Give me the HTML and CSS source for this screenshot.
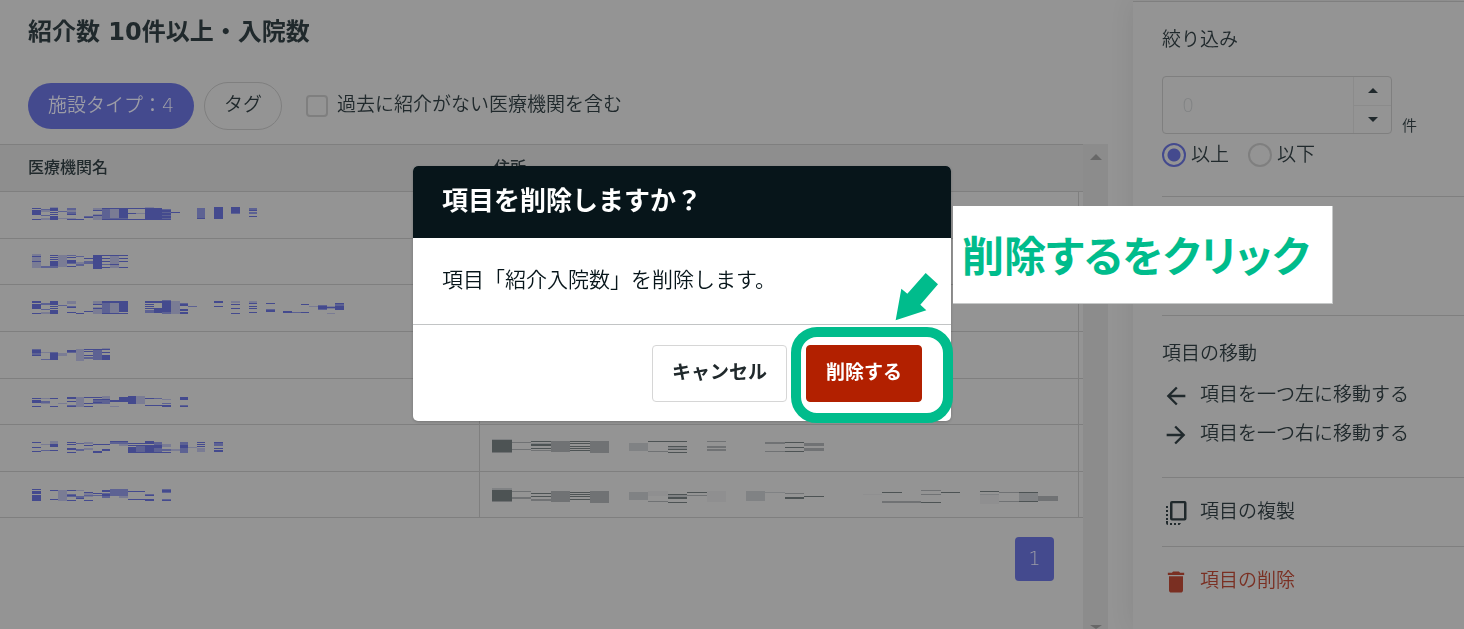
FILE: index.html
```html
<!DOCTYPE html>
<html lang="ja">
<head>
<meta charset="utf-8">
<meta name="viewport" content="width=device-width, initial-scale=1">
<title>紹介数 10件以上・入院数</title>
<link rel="stylesheet" href="styles.css">
</head>
<body>
<div class="app">
  <main class="main">
    <header class="toolbar">
      <h1 class="title">紹介数 10件以上・入院数</h1>
      <div class="filters">
        <button class="chip chip-active" type="button">施設タイプ：4</button>
        <button class="chip" type="button">タグ</button>
        <label class="check"><input class="check-box" type="checkbox"><span>過去に紹介がない医療機関を含む</span></label>
      </div>
    </header>
    <div class="scroller">
      <div class="scroll-content">
        <table class="grid">
          <thead><tr><th class="col-name">医療機関名</th><th class="col-address">住所</th><th class="col-end"></th></tr></thead>
          <tbody>
            <tr><td><svg class="mosaic" width="230" height="20" viewBox="96 42 690 60" shape-rendering="crispEdges">
              <path class="m1" d="M96 54h27v3h-27zM96 60h27v15h-27zM96 87h27v3h-27zM150 54h24v9h-24zM150 66h24v3h-24zM150 72h24v3h-24zM150 78h24v12h-24zM201 72h27v3h-27zM201 87h27v3h-27zM228 87h24v3h-24zM252 81h27v3h-27zM279 60h27v3h-27zM279 75h27v3h-27zM306 54h129v3h-129zM357 57h27v27h-27zM306 87h207v3h-207zM384 69h24v3h-24zM435 54h51v36h-51zM486 60h27v6h-27zM486 69h27v6h-27zM486 78h27v6h-27zM513 66h27v3h-27zM591 84h24v3h-24zM642 51h27v36h-27zM693 51h27v18h-27zM747 60h24v3h-24zM747 78h24v3h-24z"/>
              <path class="m2" d="M123 57h27v3h-27zM123 75h27v3h-27zM174 63h27v3h-27zM201 54h27v6h-27zM201 66h27v6h-27zM252 78h27v3h-27zM306 57h24v30h-24zM330 84h54v3h-54zM486 57h27v33h-27zM591 54h24v30h-24zM693 69h27v3h-27zM747 54h24v6h-24zM747 66h24v6h-24z"/>
              <path class="m3" d="M123 60h27v6h-27zM123 84h27v6h-27zM150 51h24v3h-24zM174 84h27v3h-27zM201 60h27v6h-27zM201 84h27v3h-27zM279 54h27v6h-27zM279 72h27v18h-27zM330 57h27v27h-27zM408 69h27v3h-27zM435 51h27v3h-27z"/></svg></td><td></td><td></td></tr>
            <tr><td><svg class="mosaic" width="100" height="20" viewBox="96 183 300 60" shape-rendering="crispEdges">
              <path class="m1" d="M96 198h27v3h-27zM96 213h27v3h-27zM150 195h24v3h-24zM150 201h24v3h-24zM150 207h24v3h-24zM150 213h24v14h-24zM201 201h27v3h-27zM201 210h27v9h-27zM201 228h27v3h-27zM252 204h27v3h-27zM279 195h27v42h-27zM306 195h78v3h-78zM306 204h24v3h-24zM306 213h24v3h-24zM306 231h24v3h-24zM357 204h27v3h-27zM357 213h27v3h-27zM330 222h27v3h-27zM357 231h27v3h-27z"/>
              <path class="m2" d="M123 228h51v6h-51zM201 195h27v3h-27zM201 219h27v3h-27zM228 198h24v3h-24zM228 222h24v5h-24zM252 213h27v9h-27zM306 222h24v3h-24z"/>
              <path class="m3" d="M96 192h27v42h-27zM174 195h27v36h-27zM228 216h24v6h-24zM330 198h27v36h-27z"/></svg></td><td></td><td></td></tr>
            <tr><td><svg class="mosaic" width="320" height="20" viewBox="96 321 960 60" shape-rendering="crispEdges">
              <path class="m1" d="M96 333h27v6h-27zM96 342h27v15h-27zM96 369h27v3h-27zM150 333h24v12h-24zM150 348h24v3h-24zM150 354h24v3h-24zM150 360h24v12h-24zM201 351h27v3h-27zM201 366h27v3h-27zM228 369h24v3h-24zM252 363h27v3h-27zM279 342h27v3h-27zM279 354h27v3h-27zM306 333h78v6h-78zM357 339h27v27h-27zM306 369h78v3h-78zM435 333h51v6h-51zM435 342h27v3h-27zM435 348h27v3h-27zM435 354h51v3h-51zM462 354h24v15h-24zM486 333h27v33h-27zM540 342h24v6h-24zM540 357h24v6h-24zM540 366h24v6h-24zM642 333h27v6h-27zM642 348h27v3h-27zM693 342h27v3h-27zM693 354h27v3h-27zM693 369h27v3h-27zM747 339h24v3h-24zM747 348h24v3h-24zM747 354h24v3h-24zM747 366h24v3h-24zM798 339h27v3h-27zM798 360h27v5h-27zM849 363h27v6h-27zM903 342h24v3h-24zM903 366h24v3h-24zM954 348h27v9h-27zM981 351h24v3h-24zM1005 339h27v3h-27zM1005 348h27v12h-27z"/>
              <path class="m2" d="M123 339h27v6h-27zM123 357h27v3h-27zM174 345h27v3h-27zM201 348h27v3h-27zM306 339h24v30h-24zM435 360h27v9h-27zM486 330h27v42h-27zM540 339h24v3h-24zM564 348h27v3h-27zM798 357h27v3h-27zM876 366h27v3h-27zM954 345h27v15h-27zM1005 342h27v6h-27z"/>
              <path class="m3" d="M123 366h27v6h-27zM201 333h27v9h-27zM279 333h27v9h-27zM279 351h27v21h-27zM330 339h27v30h-27zM513 333h27v39h-27zM693 333h27v5h-27zM747 333h24v6h-24zM927 348h27v3h-27zM981 348h24v9h-24zM981 369h24v3h-24z"/></svg></td><td></td><td></td></tr>
            <tr><td><svg class="mosaic" width="90" height="20" viewBox="96 12 270 60" shape-rendering="crispEdges">
              <path class="m1" d="M96 30h27v9h-27zM96 45h27v3h-27zM150 39h24v21h-24zM201 30h27v6h-27zM252 27h78v3h-78zM252 33h27v3h-27zM252 45h27v3h-27zM306 36h24v3h-24zM306 45h24v15h-24z"/>
              <path class="m2" d="M96 27h27v18h-27zM123 57h27v3h-27zM150 36h24v3h-24zM201 36h27v3h-27zM252 51h27v6h-27zM279 30h27v30h-27z"/>
              <path class="m3" d="M123 36h27v3h-27zM174 39h27v9h-27zM228 27h24v36h-24zM306 24h24v3h-24z"/></svg></td><td></td><td></td></tr>
            <tr><td><svg class="mosaic" width="170" height="20" viewBox="96 153 510 60" shape-rendering="crispEdges">
              <path class="m1" d="M96 174h27v3h-27zM96 180h27v9h-27zM96 198h27v3h-27zM150 174h24v3h-24zM150 198h24v3h-24zM201 171h27v6h-27zM201 183h27v3h-27zM201 198h27v3h-27zM252 171h54v3h-54zM252 189h27v3h-27zM252 198h27v3h-27zM279 177h51v3h-51zM279 186h27v3h-27zM330 180h27v6h-27zM357 171h27v15h-27zM384 168h24v24h-24zM435 174h27v3h-27zM435 195h78v3h-78zM486 198h27v3h-27zM540 171h24v9h-24zM540 198h24v3h-24z"/>
              <path class="m2" d="M123 183h27v6h-27zM201 195h27v3h-27zM279 180h51v12h-51zM462 174h24v3h-24zM486 189h27v3h-27zM540 195h24v3h-24z"/>
              <path class="m3" d="M123 174h27v3h-27zM123 189h27v3h-27zM174 189h27v3h-27zM228 171h24v30h-24zM306 168h24v9h-24zM330 198h27v3h-27zM408 168h27v24h-27zM486 177h27v3h-27z"/></svg></td><td></td><td></td></tr>
            <tr><td><svg class="mosaic" width="200" height="20" viewBox="96 291 600 60" shape-rendering="crispEdges">
              <path class="m1" d="M96 306h27v3h-27zM96 321h27v3h-27zM96 333h27v3h-27zM150 312h24v9h-24zM150 330h24v3h-24zM201 306h27v3h-27zM201 312h27v3h-27zM201 324h27v6h-27zM201 336h27v3h-27zM252 315h27v3h-27zM279 312h51v3h-51zM279 333h27v6h-27zM306 327h24v6h-24zM330 303h54v3h-54zM384 309h51v3h-51zM384 315h102v3h-102zM384 321h24v18h-24zM408 336h105v3h-105zM435 303h27v9h-27zM435 318h27v18h-27zM462 318h24v6h-24zM540 315h24v9h-24zM591 306h24v3h-24zM591 312h24v3h-24zM591 318h24v3h-24zM642 306h27v3h-27zM642 324h27v3h-27zM642 330h27v6h-27z"/>
              <path class="m2" d="M123 330h27v3h-27zM228 309h24v3h-24zM228 327h24v5h-24zM330 306h54v6h-54zM408 318h27v18h-27zM462 306h24v9h-24zM462 324h24v12h-24zM486 327h27v6h-27zM540 306h24v33h-24zM642 309h27v9h-27z"/>
              <path class="m3" d="M123 312h27v3h-27zM150 303h24v9h-24zM252 306h27v6h-27zM252 324h27v6h-27zM357 312h27v6h-27zM486 312h27v9h-27zM513 327h27v6h-27zM564 321h27v3h-27zM591 324h24v12h-24z"/></svg></td>
              <td><svg class="mosaic" width="340" height="20" viewBox="66 81 1020 60" shape-rendering="crispEdges">
              <path class="g1" d="M66 90h60v36h-60zM183 93h60v3h-60zM183 102h60v6h-60zM183 114h60v3h-60zM300 93h60v3h-60zM300 99h60v3h-60zM300 108h60v3h-60zM300 114h60v3h-60zM300 120h60v3h-60zM534 93h117v3h-117zM594 108h57v3h-57zM594 117h57v3h-57zM594 126h57v3h-57zM945 96h57v3h-57zM945 111h57v3h-57zM945 123h57v3h-57z"/>
              <path class="g2" d="M66 126h60v3h-60zM126 96h57v3h-57zM126 117h57v3h-57zM183 120h60v3h-60zM243 93h57v33h-57zM360 93h57v36h-57zM534 123h60v3h-60zM711 93h57v3h-57zM711 108h57v6h-57zM711 117h57v6h-57zM885 96h60v5h-60zM885 123h60v3h-60zM1002 99h60v9h-60zM1002 114h60v9h-60z"/>
              <path class="g3" d="M66 87h60v3h-60zM183 99h60v3h-60zM477 99h57v24h-57zM594 111h57v6h-57z"/></svg></td><td></td></tr>
            <tr><td><svg class="mosaic" width="160" height="20" viewBox="96 432 480 60" shape-rendering="crispEdges">
              <path class="m1" d="M96 447h27v3h-27zM96 453h27v9h-27zM96 465h27v18h-27zM150 450h24v3h-24zM150 477h24v3h-24zM201 450h27v3h-27zM201 465h27v3h-27zM201 480h27v3h-27zM228 474h24v3h-24zM252 456h27v3h-27zM252 480h27v3h-27zM279 459h27v3h-27zM306 450h24v6h-24zM306 462h24v6h-24zM384 453h51v3h-51zM384 477h78v3h-78zM435 465h27v3h-27zM435 480h27v3h-27zM486 450h27v6h-27zM486 480h27v3h-27z"/>
              <path class="m2" d="M201 462h27v9h-27zM228 468h24v6h-24zM252 465h54v3h-54zM306 459h24v15h-24zM330 447h54v21h-54zM435 462h27v6h-27zM486 447h27v12h-27zM486 477h27v3h-27z"/>
              <path class="m3" d="M174 450h27v33h-27zM228 450h24v3h-24zM252 459h27v12h-27zM357 465h27v8h-27z"/></svg></td>
              <td><svg class="mosaic" width="570" height="20" viewBox="66 222 1710 60" shape-rendering="crispEdges">
              <path class="g1" d="M66 240h60v33h-60zM183 249h60v3h-60zM183 258h60v3h-60zM300 246h60v3h-60zM300 252h60v3h-60zM300 258h60v3h-60zM300 267h60v3h-60zM594 252h57v3h-57zM594 261h57v6h-57zM594 276h57v3h-57zM651 246h60v3h-60zM945 261h57v6h-57zM1002 258h60v3h-60zM1236 246h60v3h-60zM1353 276h60v3h-60zM1413 246h57v3h-57zM1530 243h57v3h-57zM1647 246h57v3h-57zM1647 273h57v3h-57z"/>
              <path class="g2" d="M66 273h60v3h-60zM126 243h57v3h-57zM126 261h57v6h-57zM183 267h60v6h-60zM243 243h57v33h-57zM360 243h57v36h-57zM534 273h60v3h-60zM651 255h60v3h-60zM945 249h57v3h-57zM1236 273h117v5h-117zM1353 240h60v3h-60zM1353 252h60v3h-60zM1587 246h60v3h-60zM1587 273h60v3h-60zM1704 258h60v14h-60z"/>
              <path class="g3" d="M66 234h60v6h-60zM477 246h57v24h-57zM594 255h57v6h-57zM828 243h57v30h-57zM885 246h60v2h-60zM1530 252h57v3h-57zM1647 249h57v24h-57z"/>
              <path class="g4" d="M534 244h60v14h-60zM711 243h57v33h-57zM1178 252h58v3h-58zM1530 255h57v27h-57z"/></svg></td><td></td></tr>
          </tbody>
        </table>
        <nav class="pager"><button class="page" type="button">1</button></nav>
      </div>
      <div class="scrollbar"><i class="tri tri-up"></i><i class="tri tri-down"></i></div>
    </div>
  </main>

  <aside class="panel">
    <section class="section section-filter">
      <h2 class="heading">絞り込み</h2>
      <div class="amount">
        <div class="spinner">
          <input class="amount-input" id="amount" type="text" inputmode="numeric" placeholder="0">
          <div class="steps">
            <button class="step" type="button" aria-label="増やす"><svg width="10" height="5" viewBox="0 0 10 5"><path d="M0 5 5 0l5 5z"/></svg></button>
            <button class="step" type="button" aria-label="減らす"><svg width="10" height="5" viewBox="0 0 10 5"><path d="M0 0h10L5 5z"/></svg></button>
          </div>
        </div>
        <label class="unit" for="amount">件</label>
      </div>
      <div class="radios">
        <label class="radio"><input class="radio-dot" type="radio" name="range" checked><span>以上</span></label>
        <label class="radio"><input class="radio-dot" type="radio" name="range"><span>以下</span></label>
      </div>
    </section>
    <section class="section section-sort"></section>
    <section class="section section-move">
      <h2 class="heading">項目の移動</h2>
      <button class="action" type="button"><svg class="icon" viewBox="0 0 24 24"><path d="M20 11H7.83l5.59-5.59L12 4l-8 8 8 8 1.41-1.41L7.83 13H20z"/></svg>項目を一つ左に移動する</button>
      <button class="action" type="button"><svg class="icon" viewBox="0 0 24 24"><path d="M12 4l-1.41 1.41L16.17 11H4v2h12.17l-5.58 5.59L12 20l8-8z"/></svg>項目を一つ右に移動する</button>
    </section>
    <section class="section section-copy">
      <button class="action" type="button"><svg class="icon" viewBox="0 0 28 28"><path fill-rule="evenodd" d="M10 2h12.500a2 2 0 0 1 2 2v15.500a2 2 0 0 1-2 2H10a2 2 0 0 1-2-2V4a2 2 0 0 1 2-2zm.5 2.200v15h11.500v-15z"/><path d="M4 7h2v2H4zM4 11h2v2H4zM4 15h2v2H4zM4 19h2v2H4zM4 24v-2h2v4a2 2 0 0 1-2-2zM8 24h2v2H8zM12 24h2v2h-2zM16 24h3l-1.500 2H16z"/></svg>項目の複製</button>
    </section>
    <section class="section section-delete">
      <button class="action action-danger" type="button"><svg class="icon" viewBox="0 0 24 24"><path d="M6 19c0 1.100.9 2 2 2h8c1.100 0 2-.9 2-2V7H6v12zM19 4h-3.500l-1-1h-5l-1 1H5v2h14V4z"/></svg>項目の削除</button>
    </section>
  </aside>
</div>

<div class="dialog" role="dialog" aria-labelledby="dialog-title">
  <h2 class="dialog-title" id="dialog-title">項目を削除しますか？</h2>
  <p class="dialog-text">項目「紹介入院数」を削除します。</p>
  <div class="dialog-actions">
    <button class="button" type="button">キャンセル</button>
    <button class="button button-danger" type="button">削除する</button>
  </div>
  <div class="ring"></div>
  <svg class="arrow" width="44" height="49" viewBox="0 0 132 147"><path d="M5 145 22 50 40 65 95 3 132 37 79 98 97 115z"/></svg>
  <div class="callout">削除するをクリック</div>
</div>
</body>
</html>
```
FILE: styles.css
```css
* { box-sizing: border-box; }

body {
  margin: 0;
  background: #949494;
  color: #20292c;
  font: 350 19px/28px "DejaVu Sans", "Noto Sans CJK JP", sans-serif;
  overflow: hidden;
}

button, input {
  margin: 0;
  padding: 0;
  border: 0;
  background: none;
  color: inherit;
  font: inherit;
}

h1, h2, p { margin: 0; }

.app { display: flex; height: 100vh; }

.main {
  flex: 1;
  display: flex;
  flex-direction: column;
  min-width: 0;
}

.toolbar { padding: 16px 28px 14px; }
.title { font-size: 24px; line-height: 32px; font-weight: 700; }

.filters {
  display: flex;
  align-items: center;
  gap: 10px;
  margin-top: 34px;
}

.chip {
  height: 48px;
  padding: 0 19px 4px;
  border: 1px solid #7f7f7f;
  border-radius: 24px;
}

.chip-active {
  height: 46px;
  padding: 0 20px 3px;
  border: 0;
  border-radius: 23px;
  background: #444a8e;
  color: #9c9ca6;
}

.check {
  display: flex;
  align-items: center;
  gap: 9px;
  margin-left: 14px;
}

.check-box {
  appearance: none;
  width: 22px;
  height: 22px;
  border: 2px solid #7f7f7f;
  border-radius: 4px;
}

.check span { padding-bottom: 4px; }

.scroller { flex: 1; display: flex; min-height: 0; margin-right: 25px; }
.scroll-content { flex: 1; min-width: 0; }

.grid {
  width: 100%;
  border-collapse: separate;
  border-spacing: 0;
  table-layout: fixed;
}

.grid th {
  height: 48px;
  padding: 0 14px;
  border: solid #7f7f7f;
  border-width: 1px 0;
  background: #8e8e8e;
  font-size: 16px;
  line-height: 24px;
  font-weight: 500;
  text-align: left;
}

.grid th:first-child { padding-left: 28px; }
.col-name { width: 480px; }
.col-end { width: 4px; }
.grid .col-end { padding: 0; }

.grid td {
  height: 47px;
  padding: 0 12px 2px;
  border-right: 1px solid #7f7f7f;
  border-bottom: 1px solid #7f7f7f;
}

.grid tr:nth-child(3n+2) td,
.grid tr:last-child td { height: 46px; }
.grid td:first-child { padding-left: 32px; }
.grid td:last-child { padding: 0; border-right: 0; }

.grid thead tr:last-child th { height: 48px; }

.mosaic { display: block; }
.m1 { fill: #444a8e; }
.m2 { fill: #5d6293; }
.m3 { fill: #7a7c94; }
.m2, .m3 { mix-blend-mode: darken; }
.g1 { fill: #4d5354; }
.g2 { fill: #707274; }
.g3 { fill: #808284; }
.g4 { fill: #8f8f90; }

.pager { display: flex; justify-content: flex-end; padding: 19px 29px; }

.page {
  width: 39px;
  height: 44px;
  padding-bottom: 2px;
  border-radius: 4px;
  background: #444a8e;
  color: #9c9ca6;
}

.scrollbar {
  display: flex;
  flex-direction: column;
  justify-content: space-between;
  align-items: center;
  width: 25px;
  padding-top: 10px;
  background: #8c8c8c;
}

.tri { border: 6px solid transparent; }
.tri-up { border-top: 0; border-bottom-color: #686868; }
.tri-down { border-bottom: 0; border-top-color: #686868; border-top-width: 4px; }

.panel {
  width: 331px;
  padding-left: 29px;
  border-top: 1px solid #7f7f7f;
  background: #949494;
  box-shadow: 0 0 24px rgba(0, 0, 0, 0.08);
  margin-top: 1px;
}

.section { border-bottom: 1px solid #7f7f7f; }
.section:last-child { border-bottom: 0; }
.heading { font-size: 19px; line-height: 28px; font-weight: 350; }

.section-filter { height: 195px; padding-top: 23px; }

.amount { display: flex; align-items: flex-end; gap: 10px; margin-top: 23px; }

.spinner {
  display: flex;
  width: 230px;
  height: 58px;
  border: 1px solid #7f7f7f;
  border-radius: 4px;
}

.amount-input {
  flex: 1;
  min-width: 0;
  padding-left: 19px;
  font-weight: 300;
}

.amount-input::placeholder { color: #818384; opacity: 1; }

.steps {
  display: flex;
  flex-direction: column;
  width: 38px;
  border-left: 1px solid #8b8b8b;
}

.step {
  flex: 1;
  display: flex;
  align-items: center;
  justify-content: center;
  fill: #20292c;
}

.step + .step { border-top: 1px solid #8b8b8b; }
.unit { font-size: 15px; line-height: 16px; }
.radios { display: flex; gap: 19px; margin-top: 7px; }
.radio { display: flex; align-items: center; gap: 5px; height: 28px; }
.radio span { padding-bottom: 3px; }

.radio-dot {
  appearance: none;
  width: 24px;
  height: 24px;
  border: 2px solid #7f7f7f;
  border-radius: 50%;
}

.radio-dot:checked {
  border-color: #444a8e;
  background: radial-gradient(circle, #444a8e 6px, transparent 7px);
}

.section-sort { height: 119px; }
.section-move { height: 162px; padding-top: 23px; }
.section-move .heading { margin-bottom: 8px; }

.action {
  display: flex;
  align-items: center;
  gap: 10px;
  height: 39px;
  padding-bottom: 2px;
}

.icon { width: 28px; height: 28px; margin-top: 4px; fill: #20292c; }
.section-copy { height: 69px; padding-top: 14px; }
.section-delete { padding-top: 14px; }
.action-danger { color: #7a2f22; }
.action-danger .icon { fill: #7a2f22; }

.dialog {
  position: absolute;
  left: 413px;
  top: 166px;
  width: 538px;
  border-radius: 5px;
  background: #fff;
  color: #07151a;
  box-shadow: 0 1px 3px rgba(0, 0, 0, 0.2);
}

.dialog-title {
  padding: 17px 29px 19px;
  border-radius: 5px 5px 0 0;
  background: #07151a;
  color: #fff;
  font-size: 26px;
  line-height: 36px;
  font-weight: 700;
}

.dialog-text {
  padding: 26px 29px 28px;
  border-bottom: 1px solid #c2c4c5;
  font-size: 21px;
  line-height: 32px;
}

.dialog-actions {
  display: flex;
  justify-content: flex-end;
  gap: 19px;
  padding: 20px 29px 19px;
}

.button {
  height: 57px;
  padding: 0 19px 3px;
  border: 1px solid #d6d6d6;
  border-radius: 4px;
  color: #20292c;
  font-weight: 700;
}

.button-danger { border-color: #b22000; background: #b22000; color: #fff; }

.ring {
  position: absolute;
  left: 378px;
  top: 161px;
  width: 162px;
  height: 96px;
  border: 10px solid #00bc8c;
  border-radius: 26px;
  pointer-events: none;
}

.arrow { position: absolute; left: 481px; top: 106px; fill: #00bc8c; }

.callout {
  position: absolute;
  left: 540px;
  top: 40px;
  width: 380px;
  height: 98px;
  padding-left: 9px;
  border: solid #c6c8c8;
  border-width: 0 1px 1px 0;
  background: #fff;
  color: #00bc8c;
  font-family: "Noto Sans CJK JP", sans-serif;
  font-size: 42px;
  line-height: 96px;
  font-weight: 700;
  font-feature-settings: "palt";
  white-space: nowrap;
}
```
